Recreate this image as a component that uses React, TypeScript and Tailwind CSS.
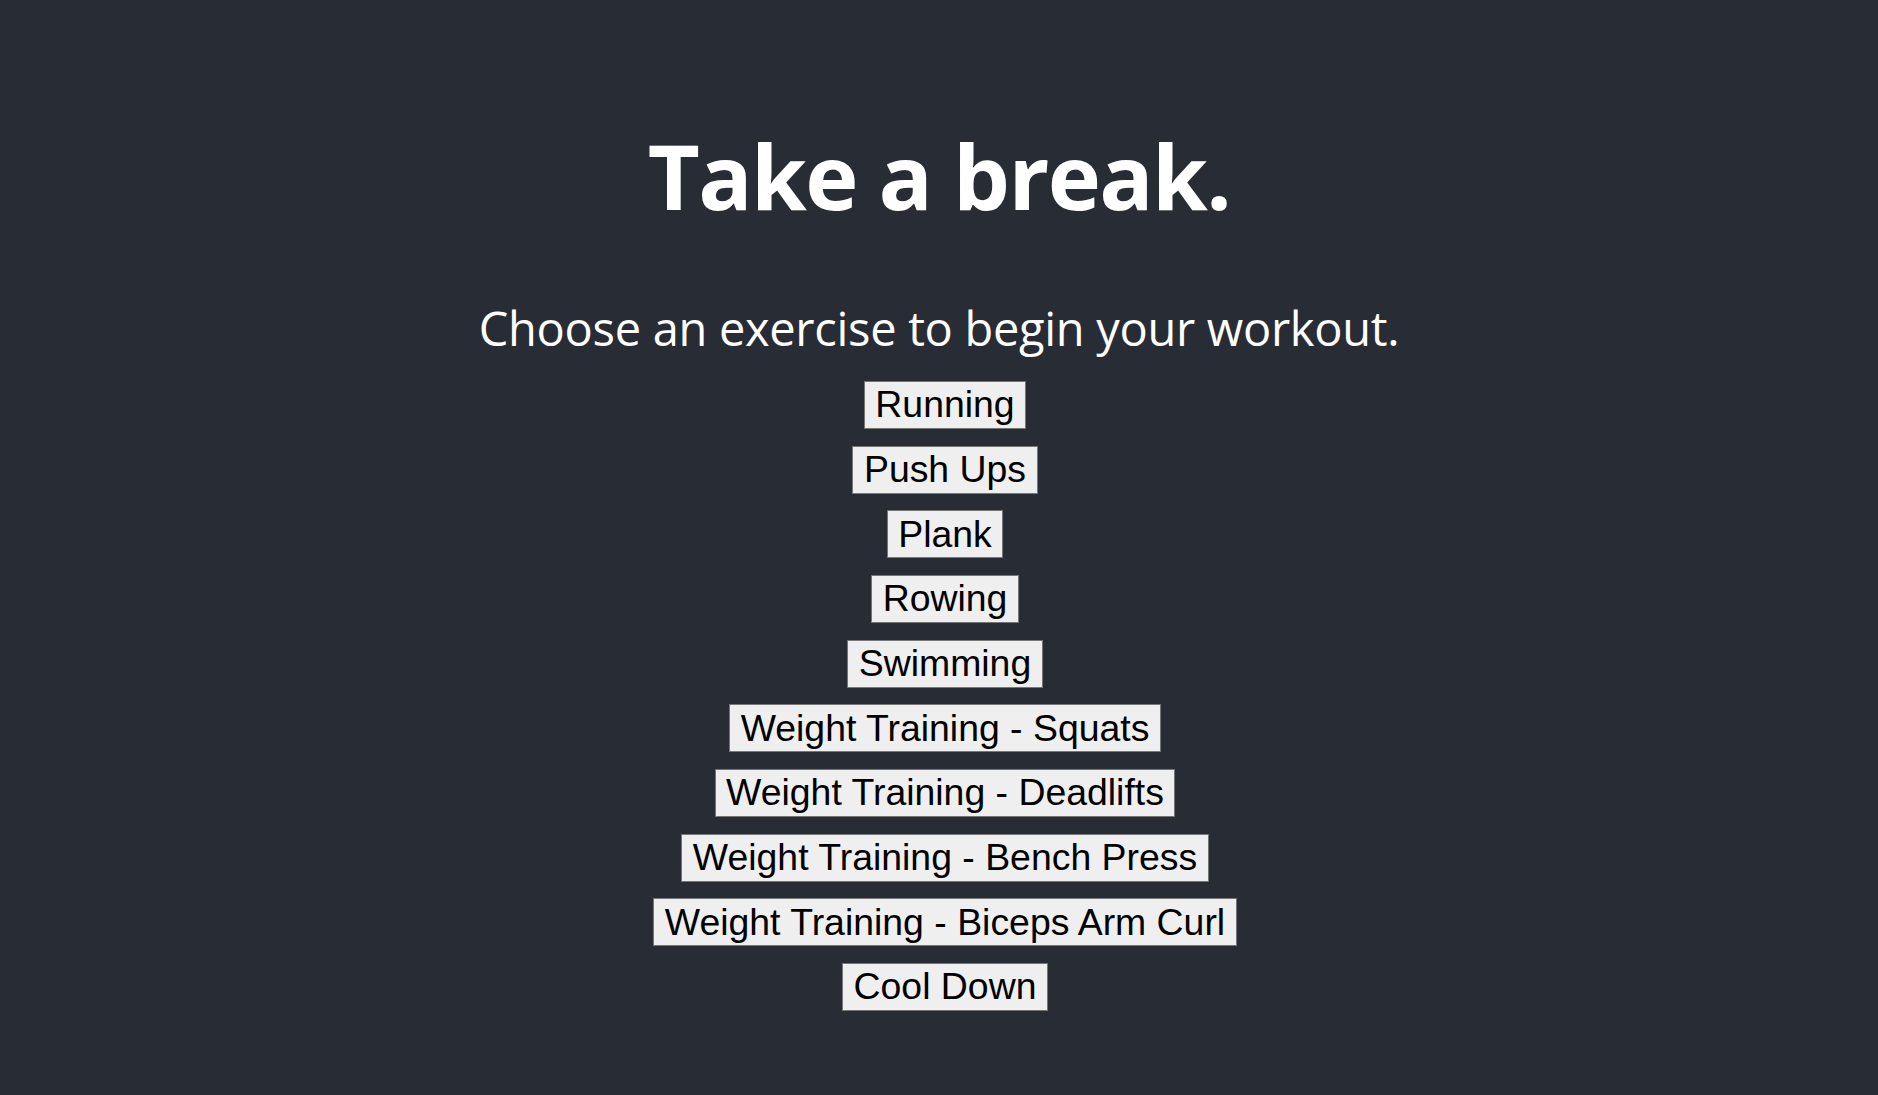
import React from "react";

const exercises = [
  "Running",
  "Push Ups",
  "Plank",
  "Rowing",
  "Swimming",
  "Weight Training - Squats",
  "Weight Training - Deadlifts",
  "Weight Training - Bench Press",
  "Weight Training - Biceps Arm Curl",
  "Cool Down",
];

export default function App() {
  return (
    <div className="min-h-screen w-full bg-[#282c34] flex flex-col items-center text-white font-['Open_Sans','Noto_Sans',sans-serif]">
      <h1 className="mt-[121px] text-[90px] font-bold leading-[1.2] tracking-[-1.6px]">
        Take a break.
      </h1>
      <p className="mt-[71px] text-[47px] leading-[1.2] tracking-[-0.3px]">
        Choose an exercise to begin your workout.
      </p>
      <div className="mt-[24.6px] pl-[12px] flex flex-col items-center gap-[16.67px]">
        {exercises.map((e) => (
          <button
            key={e}
            className="h-[48px] px-[10.5px] flex items-center bg-[#efefef] border border-[#767676] text-black text-[37.4px] leading-none font-['Liberation_Sans',Arial,sans-serif]"
          >
            {e}
          </button>
        ))}
      </div>
    </div>
  );
}
